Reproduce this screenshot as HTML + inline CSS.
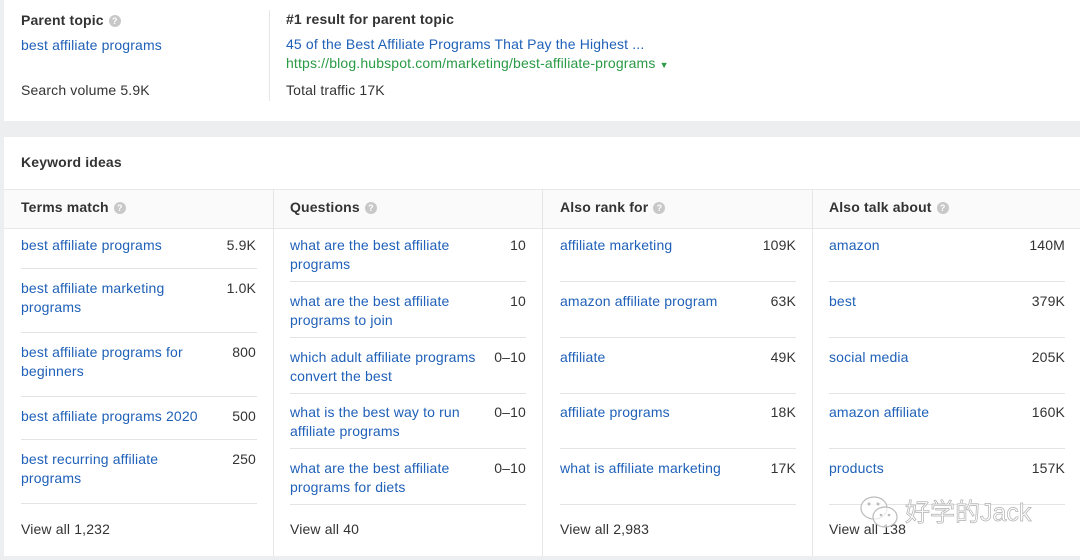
<!DOCTYPE html><html><head><style>
body{margin:0;width:1080px;height:560px;background:#eceef0;font-family:"Liberation Sans","Noto Sans CJK SC",sans-serif;font-size:14px;color:#333;position:relative;overflow:hidden;letter-spacing:0.15px}
.a{position:absolute;white-space:nowrap;line-height:19px}
.l{color:#1f60b8}
.b{font-weight:bold}
.q{display:inline-block;width:12px;height:12px;border-radius:6px;background:#c8c8c8;color:#fff;font-size:9px;line-height:12px;text-align:center;vertical-align:1px;margin-left:5px;font-weight:bold;letter-spacing:0}
.hr{position:absolute;height:1px;background:#e4e4e4}
.vr{position:absolute;width:1px;background:#e6e6e6}
.n{text-align:right}
</style></head><body>
<div style="position:absolute;left:4px;top:0;width:1076px;height:121px;background:#fff"></div>
<div style="position:absolute;left:4px;top:137px;width:1076px;height:419px;background:#fff"></div>
<div style="position:absolute;left:4px;top:189px;width:1076px;height:38px;background:#fafafa;border-top:1px solid #e8e8e8;border-bottom:1px solid #e8e8e8"></div>
<div class="vr" style="left:269px;top:10px;height:91px"></div>
<div class="a b" style="left:21px;top:11px">Parent topic<span class="q">?</span></div>
<div class="a l" style="left:21px;top:36px">best affiliate programs</div>
<div class="a" style="left:21px;top:81px">Search volume 5.9K</div>
<div class="a b" style="left:286px;top:10px">#1 result for parent topic</div>
<div class="a l" style="left:286px;top:35px">45 of the Best Affiliate Programs That Pay the Highest ...</div>
<div class="a" style="left:286px;top:54px;color:#2a9a46">https://blog.hubspot.com/marketing/best-affiliate-programs <span style="font-size:9px">▼</span></div>
<div class="a" style="left:286px;top:81px">Total traffic 17K</div>
<div class="a b" style="left:21px;top:153px">Keyword ideas</div>
<div class="vr" style="left:273px;top:189px;height:367px"></div>
<div class="vr" style="left:542px;top:189px;height:367px"></div>
<div class="vr" style="left:812px;top:189px;height:367px"></div>
<div class="a b" style="left:21px;top:198px">Terms match<span class="q">?</span></div>
<div class="a b" style="left:290px;top:198px">Questions<span class="q">?</span></div>
<div class="a b" style="left:560px;top:198px">Also rank for<span class="q">?</span></div>
<div class="a b" style="left:829px;top:198px">Also talk about<span class="q">?</span></div>

<div class="a l" style="left:21px;top:236px">best affiliate programs</div><div class="a n" style="right:824px;top:236px">5.9K</div>
<div class="hr" style="left:21px;width:236px;top:268px"></div>
<div class="a l" style="left:21px;top:279px">best affiliate marketing<br>programs</div><div class="a n" style="right:824px;top:279px">1.0K</div>
<div class="hr" style="left:21px;width:236px;top:332px"></div>
<div class="a l" style="left:21px;top:343px">best affiliate programs for<br>beginners</div><div class="a n" style="right:824px;top:343px">800</div>
<div class="hr" style="left:21px;width:236px;top:396px"></div>
<div class="a l" style="left:21px;top:407px">best affiliate programs 2020</div><div class="a n" style="right:824px;top:407px">500</div>
<div class="hr" style="left:21px;width:236px;top:439px"></div>
<div class="a l" style="left:21px;top:450px">best recurring affiliate<br>programs</div><div class="a n" style="right:824px;top:450px">250</div>
<div class="hr" style="left:21px;width:236px;top:503px"></div>
<div class="a" style="left:21px;top:520px">View all 1,232</div>

<div class="a l" style="left:290px;top:236px">what are the best affiliate<br>programs</div><div class="a n" style="right:554px;top:236px">10</div>
<div class="hr" style="left:290px;width:236px;top:281px"></div>
<div class="a l" style="left:290px;top:292px">what are the best affiliate<br>programs to join</div><div class="a n" style="right:554px;top:292px">10</div>
<div class="hr" style="left:290px;width:236px;top:337px"></div>
<div class="a l" style="left:290px;top:348px">which adult affiliate programs<br>convert the best</div><div class="a n" style="right:554px;top:348px">0–10</div>
<div class="hr" style="left:290px;width:236px;top:393px"></div>
<div class="a l" style="left:290px;top:403px">what is the best way to run<br>affiliate programs</div><div class="a n" style="right:554px;top:403px">0–10</div>
<div class="hr" style="left:290px;width:236px;top:448px"></div>
<div class="a l" style="left:290px;top:459px">what are the best affiliate<br>programs for diets</div><div class="a n" style="right:554px;top:459px">0–10</div>
<div class="hr" style="left:290px;width:236px;top:504px"></div>
<div class="a" style="left:290px;top:520px">View all 40</div>

<div class="a l" style="left:560px;top:236px">affiliate marketing</div><div class="a n" style="right:284px;top:236px">109K</div>
<div class="hr" style="left:560px;width:236px;top:281px"></div>
<div class="a l" style="left:560px;top:292px">amazon affiliate program</div><div class="a n" style="right:284px;top:292px">63K</div>
<div class="hr" style="left:560px;width:236px;top:337px"></div>
<div class="a l" style="left:560px;top:348px">affiliate</div><div class="a n" style="right:284px;top:348px">49K</div>
<div class="hr" style="left:560px;width:236px;top:393px"></div>
<div class="a l" style="left:560px;top:403px">affiliate programs</div><div class="a n" style="right:284px;top:403px">18K</div>
<div class="hr" style="left:560px;width:236px;top:448px"></div>
<div class="a l" style="left:560px;top:459px">what is affiliate marketing</div><div class="a n" style="right:284px;top:459px">17K</div>
<div class="hr" style="left:560px;width:236px;top:504px"></div>
<div class="a" style="left:560px;top:520px">View all 2,983</div>

<div class="a l" style="left:829px;top:236px">amazon</div><div class="a n" style="right:15px;top:236px">140M</div>
<div class="hr" style="left:829px;width:236px;top:281px"></div>
<div class="a l" style="left:829px;top:292px">best</div><div class="a n" style="right:15px;top:292px">379K</div>
<div class="hr" style="left:829px;width:236px;top:337px"></div>
<div class="a l" style="left:829px;top:348px">social media</div><div class="a n" style="right:15px;top:348px">205K</div>
<div class="hr" style="left:829px;width:236px;top:393px"></div>
<div class="a l" style="left:829px;top:403px">amazon affiliate</div><div class="a n" style="right:15px;top:403px">160K</div>
<div class="hr" style="left:829px;width:236px;top:448px"></div>
<div class="a l" style="left:829px;top:459px">products</div><div class="a n" style="right:15px;top:459px">157K</div>
<div class="hr" style="left:829px;width:236px;top:504px"></div>
<div class="a" style="left:829px;top:520px">View all 138</div>
<svg class="a" style="left:858px;top:494px" width="44" height="40" viewBox="0 0 44 40"><g fill="rgba(255,255,255,.7)" stroke="#bbb" stroke-width="1.2"><ellipse cx="16" cy="14" rx="13" ry="11"/><ellipse cx="27" cy="23" rx="12" ry="10"/></g><g fill="#bbb"><circle cx="11" cy="10" r="1.5"/><circle cx="20" cy="10" r="1.5"/><circle cx="23" cy="21" r="1.3"/><circle cx="31" cy="21" r="1.3"/></g></svg>
<div class="a" style="left:905px;top:498px;font-size:25px;line-height:30px;color:rgba(255,255,255,.7);-webkit-text-stroke:0.7px #b0b0b0;letter-spacing:0">好学的Jack</div>
</body></html>
